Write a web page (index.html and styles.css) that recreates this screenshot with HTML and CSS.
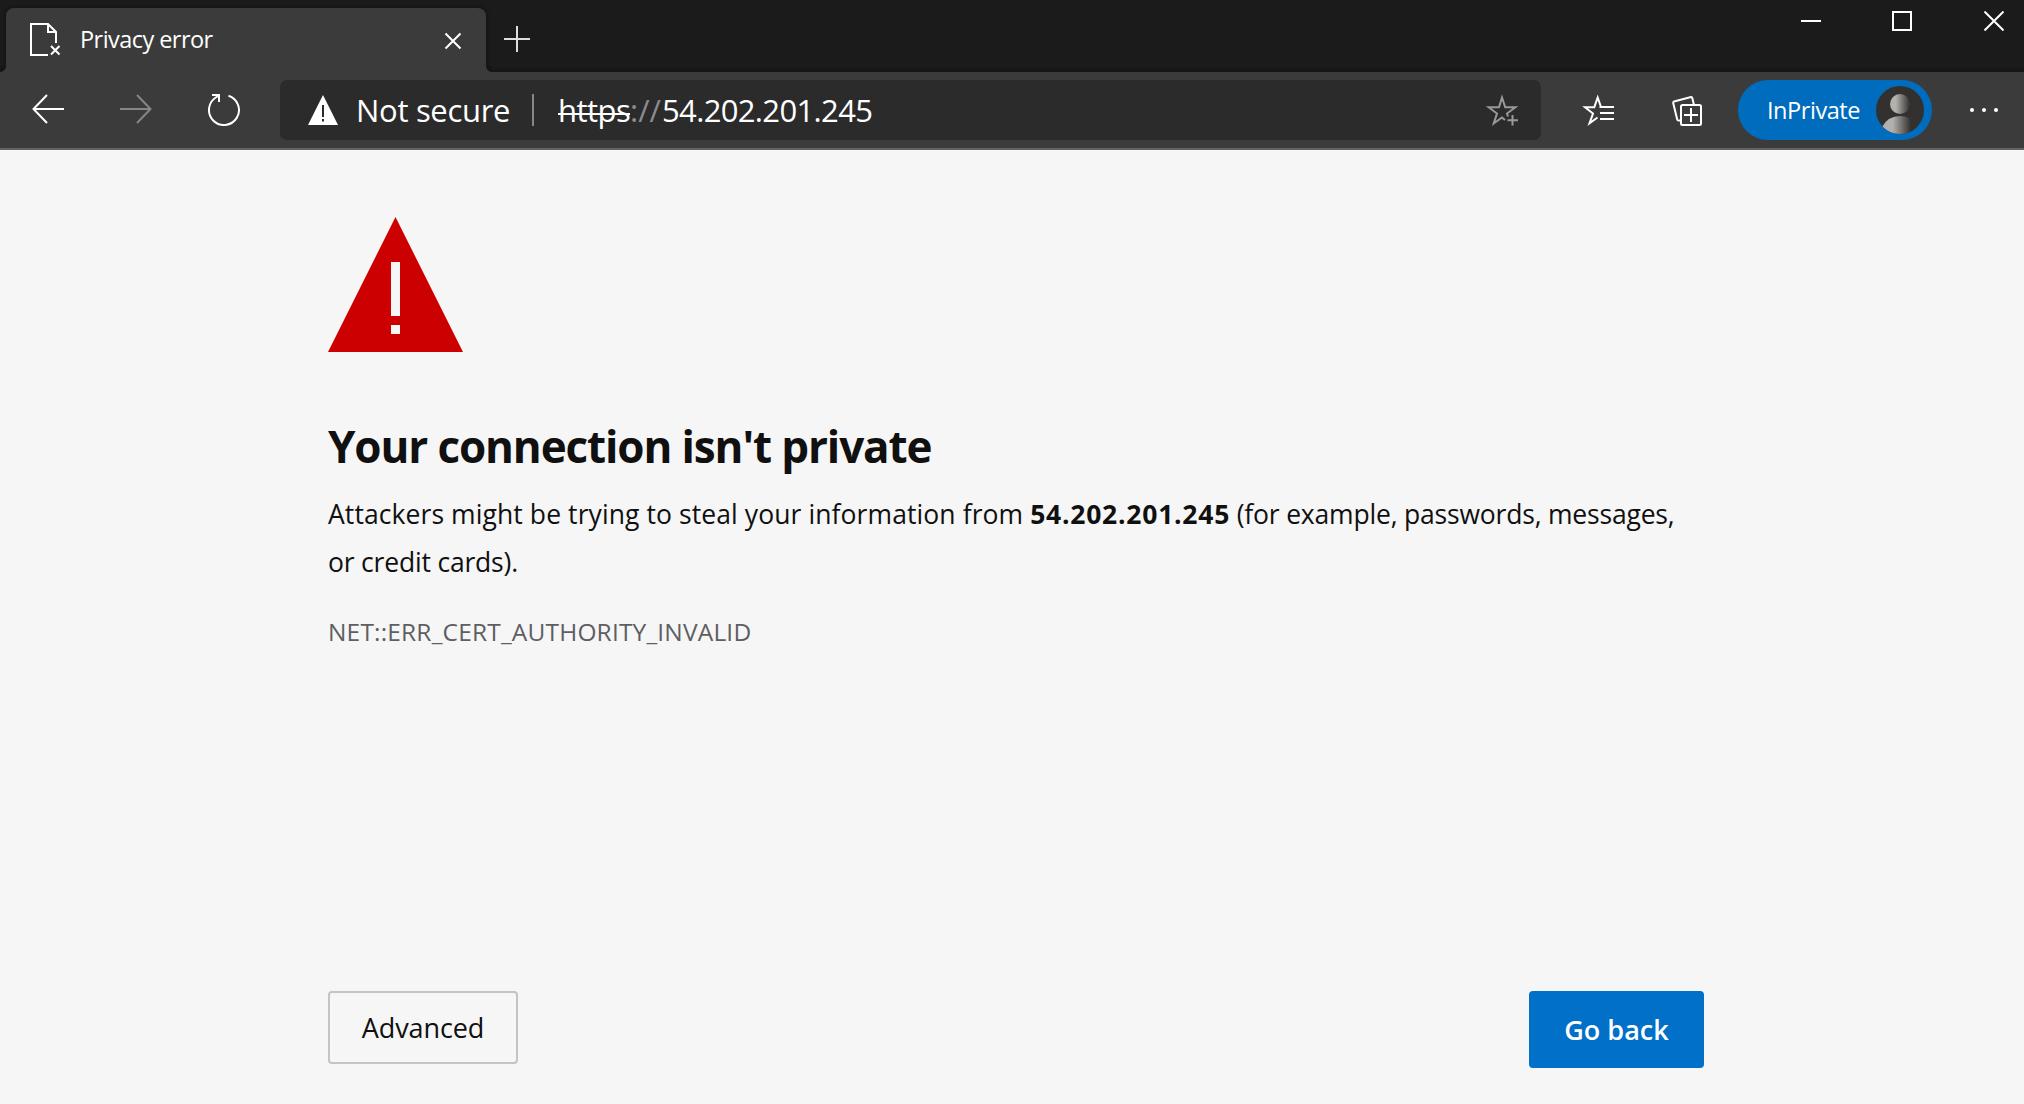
FILE: index.html
```
<!DOCTYPE html>
<html lang="en">
<head>
<meta charset="utf-8">
<title>Privacy error</title>
<link rel="stylesheet" href="styles.css">
</head>
<body>
<header class="titlebar">
  <div class="tab">
    <svg class="tab-icon" width="32" height="34" viewBox="0 0 32 34" fill="none" stroke="#fff" stroke-width="2"><path d="M18 32H1V1h17l8 8v11M18 1v8h8"/><path d="M21 23l8.500 8.500M29.500 23L21 31.500"/></svg>
    <span class="tab-title">Privacy error</span>
    <svg class="tab-close" width="18" height="18" viewBox="0 0 18 18" stroke="#fff" stroke-width="2"><path d="M1.500 1.500l15 15M16.500 1.500l-15 15"/></svg>
  </div>
  <svg class="new-tab" width="26" height="26" viewBox="0 0 26 26" stroke="#dedede" stroke-width="2"><path d="M13 0v26M0 13h26"/></svg>
  <div class="window-controls">
    <svg width="20" height="20" viewBox="0 0 20 20" stroke="#fff" stroke-width="2"><path d="M0 10h20"/></svg>
    <svg width="20" height="20" viewBox="0 0 20 20" fill="none" stroke="#fff" stroke-width="2"><path d="M1 1h18v18H1z"/></svg>
    <svg class="window-close" width="20" height="20" viewBox="0 0 20 20" stroke="#fff" stroke-width="2"><path d="M.5.5l19 19M19.500.5l-19 19"/></svg>
  </div>
</header>
<nav class="toolbar">
  <svg class="back" width="32" height="30" viewBox="0 0 32 30" fill="none" stroke="#fff" stroke-width="2"><path d="M15 1L1.500 15 15 29M1.500 15H32"/></svg>
  <svg class="forward" width="32" height="30" viewBox="0 0 32 30" fill="none" stroke="#868686" stroke-width="2"><path d="M17 1l13.500 14L17 29M30.500 15H0"/></svg>
  <svg class="reload" width="34" height="34" viewBox="0 0 34 34" fill="none" stroke="#fff" stroke-width="2"><path d="M21.500 2.700A15 15 0 1 1 9.500 4L12 2.500M5 2h7v7"/></svg>
  <div class="address">
    <svg class="warn-small" width="30" height="30" viewBox="0 0 30 30"><path fill="#fff" d="M15 0l15 30H0z"/><path fill="#2b2b2b" d="M14 10h2v12h-2zM14 24h2v2.500h-2z"/></svg>
    <span class="not-secure">Not secure</span>
    <span class="divider"></span>
    <span class="url"><span class="scheme">https</span><span class="slashes">://</span><span class="host">54.202.201.245</span></span>
    <svg class="add-favorite" width="34" height="34" viewBox="0 0 34 34" fill="none" stroke="#999" stroke-width="2"><path d="M20 27l-3-2.500-8.300 6L12 20.500l-8.300-6.300H14L17 4.500l3.200 9.700h10.200L22 20.500l1 3M27.500 22v10.500M22.500 27.200H33"/></svg>
  </div>
  <svg class="favorites" width="34" height="34" viewBox="0 0 34 34" fill="none" stroke="#fff" stroke-width="2"><path d="M20 14l-3.300-9.500L13.300 14.200H4l8 6.300L8.500 30.300 16.500 24.500M18.500 14H33M19 20h14M19 26h14"/></svg>
  <svg class="collections" width="32" height="32" viewBox="0 0 32 32" fill="none" stroke="#fff" stroke-width="2"><rect x="10" y="11" width="20" height="20" rx="1.500"/><path d="M20 14v14M13 21h14M9 26.500H7.500Q6.500 26.500 6.200 25.500L2.200 9Q2 7.800 3 7.500L20 3.100Q21 3 21.300 4L23 11"/></svg>
  <div class="inprivate">
    <span>InPrivate</span>
    <svg width="48" height="48" viewBox="0 0 48 48"><defs><linearGradient id="g" x1="0" x2="1"><stop offset=".3" stop-color="#b3b0ad"/><stop offset="1" stop-color="#32312f"/></linearGradient><linearGradient id="h" x1="0" x2="1"><stop offset=".3" stop-color="#b3b0ad"/><stop offset=".8" stop-color="#32312f"/></linearGradient><clipPath id="c"><circle cx="24" cy="24" r="24"/></clipPath></defs><circle cx="24" cy="24" r="24" fill="#32312f"/><circle cx="24" cy="18" r="10" fill="url(#g)"/><path clip-path="url(#c)" fill="url(#h)" d="M6 48V41Q12 30 24 30q12 0 18 11v7z"/></svg>
  </div>
  <svg class="more" width="28" height="4" viewBox="0 0 28 4" fill="#fff"><circle cx="2" cy="2" r="2"/><circle cx="14" cy="2" r="2"/><circle cx="26" cy="2" r="2"/></svg>
</nav>
<main class="page">
  <svg class="warning" width="135" height="135" viewBox="0 0 135 135"><path fill="#c00" d="M67.500 0L135 135H0z"/><path fill="#f6f6f6" d="M63 45h9v54h-9zM63 108h9v9h-9z"/></svg>
  <h1>Your connection isn't private</h1>
  <p class="message">Attackers might be trying to steal your information from <strong>54.202.201.245</strong><span class="tail"> (for example, passwords, messages,<br>or credit cards).</span></p>
  <p class="code">NET::ERR_CERT_AUTHORITY_INVALID</p>
  <div class="actions">
    <button class="advanced">Advanced</button>
    <button class="go-back">Go back</button>
  </div>
</main>
</body>
</html>
```

FILE: styles.css
```
* { box-sizing: border-box; }
body { margin: 0; height: 1104px; overflow: hidden; background: #f6f6f6; color: #101010; font-family: "Open Sans", "Noto Sans", sans-serif; }
svg { display: block; flex: none; }

.titlebar { display: flex; height: 72px; padding-left: 6px; background: linear-gradient(#1b1b1b 66px, #151515); }
.tab { position: relative; display: flex; align-items: center; width: 480px; height: 64px; margin-top: 8px; padding: 0 24px; background: #3b3b3b; border-radius: 8px 8px 0 0; box-shadow: 0 0 4px #0008; clip-path: inset(-6px -8px 0 -6px); }
.tab::before, .tab::after { content: ""; position: absolute; bottom: 0; width: 6px; height: 6px; }
.tab::before { left: -6px; background: radial-gradient(circle at 0 0, #151515 5.5px, #3b3b3b 6.5px); }
.tab::after { right: -6px; background: radial-gradient(circle at 100% 0, #151515 5.5px, #3b3b3b 6.5px); }
.tab-title { margin: -2px 0 0 18px; color: #fff; font-size: 23.5px; letter-spacing: -0.55px; white-space: nowrap; }
.tab-close { margin: 2px 0 0 auto; }
.new-tab { margin: 26px 0 0 18px; }
.window-controls { display: flex; gap: 71px; margin: 11px 20px 0 auto; }
.window-close { margin-left: 1px; }

.toolbar { display: flex; align-items: center; height: 78px; padding: 0 26px 0 32px; background: #3b3b3b; border-bottom: 2px solid #636363; }
.back { margin-top: -2px; }
.forward { margin: -2px 0 0 56px; }
.reload { margin-left: 55px; }
.address { display: flex; flex: none; align-items: center; width: 1261px; height: 60px; margin-left: 39px; padding: 0 22px 0 28px; background: #2b2b2b; border-radius: 7px; color: #fff; font-size: 31px; white-space: nowrap; }
.warn-small { margin-top: -1px; }
.not-secure { margin-left: 18px; width: 155px; letter-spacing: -0.3px; }
.divider { width: 2px; height: 32px; margin-left: 21px; background: #868686; }
.url { display: flex; margin-left: 24px; }
.scheme { width: 72px; letter-spacing: -0.5px; background: linear-gradient(#fff, #fff) 0 24px / 100% 2px no-repeat; }
.slashes { width: 32px; color: #8c8c8c; }
.host { letter-spacing: -0.65px; }
.add-favorite { margin-left: auto; }
.favorites { margin-left: 40px; }
.collections { margin-left: 56px; }
.inprivate { display: flex; flex: none; align-items: center; justify-content: space-between; width: 194px; height: 60px; margin-left: 35px; padding: 0 8px 0 29px; border-radius: 30px; background: #006cbe; color: #fff; font-size: 23.5px; letter-spacing: -0.45px; }
.inprivate span { margin-top: -1px; }
.more { margin-left: 38px; }

.page { display: flex; flex-direction: column; width: 1376px; margin: 67px 0 0 328px; }
h1 { margin: 64px 0 0; font-size: 44px; line-height: 60px; letter-spacing: -1.12px; }
.message { margin: 14px 0 0; font-size: 26.5px; line-height: 48px; letter-spacing: 0.09px; white-space: nowrap; }
.message strong { letter-spacing: 0.75px; }
.message .tail { letter-spacing: -0.19px; }
.code { margin: 26px 0 0; color: #5e5e63; font-size: 24.5px; line-height: 40px; letter-spacing: 0.17px; }
.actions { display: flex; justify-content: space-between; align-items: flex-start; margin-top: 339px; }
button { font-family: inherit; font-size: 27px; border-radius: 4px; padding: 0; white-space: nowrap; }
.advanced { width: 190px; height: 73px; border: 2px solid #c4c4c4; background: none; color: #101010; letter-spacing: -0.1px; }
.go-back { width: 175px; height: 77px; border: 0; background: #0070c8; color: #fff; font-weight: 600; }
```
